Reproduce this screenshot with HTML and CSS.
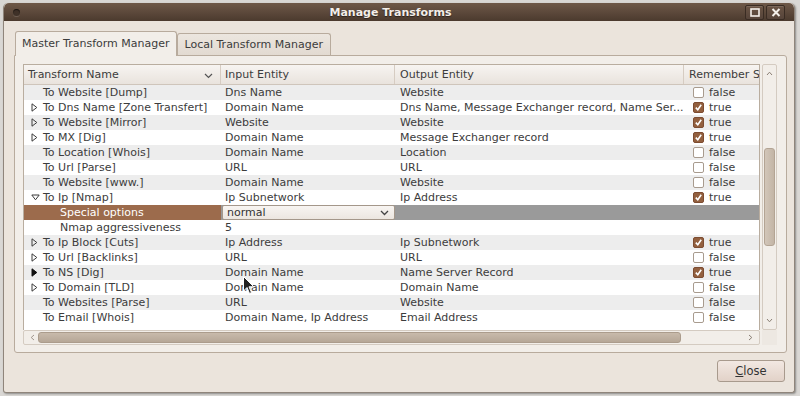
FILE: index.html
```html
<!DOCTYPE html>
<html lang="en">
<head>
  <meta charset="UTF-8">
  <meta name="viewport" content="width=device-width, initial-scale=1.0">
  <title>Manage Transforms</title>
  <link rel="stylesheet" href="styles.css">
</head>
<body>

  <div class="window">
    <div class="titlebar">
      <span class="menu-btn"></span>
      <span class="title">Manage Transforms</span>
      <div class="wm-buttons">
        <span class="wm-btn">
          <svg width="10" height="9" viewBox="0 0 10 9"><rect x="1" y="1" width="8" height="7" fill="none" stroke="#f4efea" stroke-width="1.6"/></svg>
        </span>
        <span class="wm-btn">
          <svg width="10" height="9" viewBox="0 0 10 9"><path d="M1.5 1 L8.5 8 M8.5 1 L1.5 8" stroke="#f4efea" stroke-width="2"/></svg>
        </span>
      </div>
    </div>

    <div class="content">
      <div class="tabs">
        <div class="tab active">Master Transform Manager</div>
        <div class="tab">Local Transform Manager</div>
      </div>

      <div class="panel">
        <div class="tree">
          <div class="tree-head">
            <div class="th">Transform Name
              <svg class="sort" width="9" height="6" viewBox="0 0 9 6"><path d="M1 1 L4.5 4.5 L8 1" fill="none" stroke="#555" stroke-width="1.2"/></svg>
            </div>
            <div class="th">Input Entity</div>
            <div class="th">Output Entity</div>
            <div class="th">Remember S</div>
          </div>

          <div class="tree-body">
            <div class="row alt">
              <div class="td name"><span class="exp"></span>To Website [Dump]</div>
              <div class="td">Dns Name</div>
              <div class="td out">Website</div>
              <div class="td rem"><span class="check"></span>false</div>
            </div>
            <div class="row">
              <div class="td name"><span class="exp"><svg width="7" height="9" viewBox="0 0 7 9"><path d="M1 0.8 L5.8 4.5 L1 8.2 Z" fill="none" stroke="#3c3c3c"/></svg></span>To Dns Name [Zone Transfert]</div>
              <div class="td">Domain Name</div>
              <div class="td out">Dns Name, Message Exchanger record, Name Ser...</div>
              <div class="td rem"><span class="check on"></span>true</div>
            </div>
            <div class="row alt">
              <div class="td name"><span class="exp"><svg width="7" height="9" viewBox="0 0 7 9"><path d="M1 0.8 L5.8 4.5 L1 8.2 Z" fill="none" stroke="#3c3c3c"/></svg></span>To Website [Mirror]</div>
              <div class="td">Website</div>
              <div class="td out">Website</div>
              <div class="td rem"><span class="check on"></span>true</div>
            </div>
            <div class="row">
              <div class="td name"><span class="exp"><svg width="7" height="9" viewBox="0 0 7 9"><path d="M1 0.8 L5.8 4.5 L1 8.2 Z" fill="none" stroke="#3c3c3c"/></svg></span>To MX [Dig]</div>
              <div class="td">Domain Name</div>
              <div class="td out">Message Exchanger record</div>
              <div class="td rem"><span class="check on"></span>true</div>
            </div>
            <div class="row alt">
              <div class="td name"><span class="exp"></span>To Location [Whois]</div>
              <div class="td">Domain Name</div>
              <div class="td out">Location</div>
              <div class="td rem"><span class="check"></span>false</div>
            </div>
            <div class="row">
              <div class="td name"><span class="exp"></span>To Url [Parse]</div>
              <div class="td">URL</div>
              <div class="td out">URL</div>
              <div class="td rem"><span class="check"></span>false</div>
            </div>
            <div class="row alt">
              <div class="td name"><span class="exp"></span>To Website [www.]</div>
              <div class="td">Domain Name</div>
              <div class="td out">Website</div>
              <div class="td rem"><span class="check"></span>false</div>
            </div>
            <div class="row">
              <div class="td name"><span class="exp"><svg width="9" height="7" viewBox="0 0 9 7"><path d="M0.8 1 L8.2 1 L4.5 5.8 Z" fill="none" stroke="#3c3c3c"/></svg></span>To Ip [Nmap]</div>
              <div class="td">Ip Subnetwork</div>
              <div class="td out">Ip Address</div>
              <div class="td rem"><span class="check on"></span>true</div>
            </div>
            <div class="row selected">
              <div class="td name child">Special options</div>
              <div class="td combo-cell">
                <div class="combo">normal
                  <svg width="9" height="6" viewBox="0 0 9 6"><path d="M1 1 L4.5 4.5 L8 1" fill="none" stroke="#444" stroke-width="1.3"/></svg>
                </div>
              </div>
              <div class="td out"></div>
              <div class="td rem"></div>
            </div>
            <div class="row">
              <div class="td name child">Nmap aggressiveness</div>
              <div class="td">5</div>
              <div class="td out"></div>
              <div class="td rem"></div>
            </div>
            <div class="row alt">
              <div class="td name"><span class="exp"><svg width="7" height="9" viewBox="0 0 7 9"><path d="M1 0.8 L5.8 4.5 L1 8.2 Z" fill="none" stroke="#3c3c3c"/></svg></span>To Ip Block [Cuts]</div>
              <div class="td">Ip Address</div>
              <div class="td out">Ip Subnetwork</div>
              <div class="td rem"><span class="check on"></span>true</div>
            </div>
            <div class="row">
              <div class="td name"><span class="exp"><svg width="7" height="9" viewBox="0 0 7 9"><path d="M1 0.8 L5.8 4.5 L1 8.2 Z" fill="none" stroke="#3c3c3c"/></svg></span>To Url [Backlinks]</div>
              <div class="td">URL</div>
              <div class="td out">URL</div>
              <div class="td rem"><span class="check"></span>false</div>
            </div>
            <div class="row alt">
              <div class="td name"><span class="exp"><svg width="7" height="9" viewBox="0 0 7 9"><path d="M1 0.8 L5.8 4.5 L1 8.2 Z" fill="#111" stroke="#111"/></svg></span>To NS [Dig]</div>
              <div class="td">Domain Name</div>
              <div class="td out">Name Server Record</div>
              <div class="td rem"><span class="check on"></span>true</div>
            </div>
            <div class="row">
              <div class="td name"><span class="exp"><svg width="7" height="9" viewBox="0 0 7 9"><path d="M1 0.8 L5.8 4.5 L1 8.2 Z" fill="none" stroke="#3c3c3c"/></svg></span>To Domain [TLD]</div>
              <div class="td">Domain Name</div>
              <div class="td out">Domain Name</div>
              <div class="td rem"><span class="check"></span>false</div>
            </div>
            <div class="row alt">
              <div class="td name"><span class="exp"></span>To Websites [Parse]</div>
              <div class="td">URL</div>
              <div class="td out">Website</div>
              <div class="td rem"><span class="check"></span>false</div>
            </div>
            <div class="row">
              <div class="td name"><span class="exp"></span>To Email [Whois]</div>
              <div class="td">Domain Name, Ip Address</div>
              <div class="td out">Email Address</div>
              <div class="td rem"><span class="check"></span>false</div>
            </div>
          </div>

          <svg class="cursor" width="12" height="19" viewBox="0 0 12 19">
            <path d="M0.5 0.5 L0.5 15 L4 11.5 L6.5 17.5 L8.5 16.5 L6 10.8 L10.8 10.8 Z" fill="#222" stroke="#fff" stroke-width="1"/>
          </svg>
        </div>

        <div class="vscroll">
          <svg class="arrow" width="7" height="5" viewBox="0 0 7 5"><path d="M1 4 L3.5 1.2 L6 4" fill="none" stroke="#8a7f75"/></svg>
          <div class="vtrack"><div class="vthumb"></div></div>
          <svg class="arrow" width="7" height="5" viewBox="0 0 7 5"><path d="M1 1 L3.5 3.8 L6 1" fill="none" stroke="#8a7f75"/></svg>
        </div>

        <div class="hscroll">
          <svg class="arrow" width="5" height="7" viewBox="0 0 5 7"><path d="M4 1 L1.2 3.5 L4 6" fill="none" stroke="#a0968c"/></svg>
          <div class="htrack"><div class="hthumb"></div></div>
          <svg class="arrow" width="5" height="7" viewBox="0 0 5 7"><path d="M1 1 L3.8 3.5 L1 6" fill="none" stroke="#8a7f75"/></svg>
        </div>
        <div class="corner"></div>
      </div>

      <div class="actions">
        <button type="button" class="close-btn"><u>C</u>lose</button>
      </div>
    </div>
  </div>

</body>
</html>
```

FILE: styles.css
```css
body {
  margin: 0;
  width: 800px;
  height: 396px;
  overflow: hidden;
  background-color: #d9d7d4;
  font-family: 'DejaVu Sans', Verdana, sans-serif;
  font-size: 11px;
  color: #3c3c3c;
}
.window {
  margin: 3px 0 0 3px;
  width: 790px;
  height: 389px;
  background-color: #ebe4dc;
  border: 1px solid #8f857b;
  border-top: none;
  border-radius: 5px 5px 3px 3px;
  box-shadow: 1px 1px 2px rgba(0, 0, 0, 0.35);
  overflow: hidden;
}
.titlebar {
  height: 18px;
  display: flex;
  align-items: center;
  background: linear-gradient(#6e5848, #4b3a2e);
  border-radius: 5px 5px 0 0;
}
.menu-btn {
  width: 7px;
  height: 7px;
  margin-left: 9px;
  border-radius: 50%;
  background: #3f3128;
  box-shadow: inset 0 1px 1px rgba(0, 0, 0, 0.6), 0 1px 0 rgba(255, 255, 255, 0.15);
}
.title {
  flex: 1;
  text-align: center;
  font-weight: bold;
  color: #f3eee9;
  padding-left: 16px;
  text-shadow: 0 1px 1px rgba(0, 0, 0, 0.5);
}
.wm-buttons {
  display: flex;
  gap: 2px;
  margin-right: 9px;
}
.wm-btn {
  width: 17px;
  height: 13px;
  display: flex;
  align-items: center;
  justify-content: center;
  border: 1px solid #3a2c23;
  border-radius: 2px;
  background: linear-gradient(#6a5444, #56443a);
  box-shadow: inset 0 1px 0 rgba(255, 255, 255, 0.12);
}
.content {
  padding: 10px 7px 0 10px;
}
.tabs {
  display: flex;
  align-items: flex-end;
  height: 24px;
  margin-left: 1px;
}
.tab {
  height: 21px;
  line-height: 21px;
  padding: 0 7px;
  background: linear-gradient(#ece6df, #e2dad1);
  border: 1px solid #b8ab9d;
  border-bottom: none;
  border-radius: 3px 3px 0 0;
}
.tab.active {
  height: 24px;
  line-height: 24px;
  padding: 0 6px;
  margin-bottom: -1px;
  background: #f2eee9;
  position: relative;
  z-index: 1;
}
.panel {
  box-sizing: border-box;
  height: 298px;
  background: #f2eee9;
  border: 1px solid #b8ab9d;
  border-radius: 0 3px 3px 3px;
  padding: 8px 8px 0 8px;
  display: grid;
  grid-template-columns: 737px 15px;
  grid-template-rows: 266px 15px;
  column-gap: 2px;
}
.tree {
  position: relative;
  background: #fff;
  border: 1px solid #b9ad9f;
  border-bottom: none;
  overflow: hidden;
}
.tree-head {
  display: grid;
  grid-template-columns: 197px 174px 289px 80px;
  height: 20px;
  background: linear-gradient(#f7f4f1, #e9e3dd);
  border-bottom: 1px solid #cfc5bb;
  box-sizing: border-box;
}
.th {
  position: relative;
  line-height: 20px;
  padding-left: 4px;
  white-space: nowrap;
  overflow: hidden;
  border-right: 1px solid #d6ccc2;
  box-sizing: border-box;
}
.th:nth-child(3) {
  padding-left: 5px;
}
.th:last-child {
  border-right: none;
  padding-left: 5px;
}
.th .sort {
  position: absolute;
  right: 7px;
  top: 8px;
}
.row {
  display: grid;
  grid-template-columns: 197px 174px 289px 80px;
  height: 15px;
  line-height: 15px;
}
.row.alt {
  background: #ededed;
}
.td {
  white-space: nowrap;
  overflow: hidden;
  padding-left: 4px;
  display: flex;
  align-items: center;
}
.td.out {
  padding-left: 5px;
}
.td.rem {
  padding-left: 9px;
}
.td.child {
  padding-left: 36px;
}
.exp {
  width: 15px;
  height: 15px;
  display: flex;
  align-items: center;
  padding-left: 3px;
  box-sizing: border-box;
}
.check {
  width: 9px;
  height: 9px;
  margin-right: 5px;
  border: 1px solid #a89b8e;
  border-radius: 2px;
  background: #fff;
}
.check.on {
  border-color: #7d4c31;
  background: #93603f url("data:image/svg+xml,%3Csvg xmlns='http://www.w3.org/2000/svg' width='9' height='9'%3E%3Cpath d='M1.8 4.6 L3.8 6.8 L7.2 1.8' fill='none' stroke='%23fff' stroke-width='1.6'/%3E%3C/svg%3E") no-repeat center;
}
.row.selected {
  background: #9a9a9a;
}
.row.selected .name {
  background: #9c6b4c;
  color: #fff;
}
.combo-cell {
  padding: 0 0 0 1px;
}
.combo {
  flex: 1;
  height: 13px;
  line-height: 13px;
  padding: 0 5px 0 4px;
  display: flex;
  align-items: center;
  justify-content: space-between;
  background: linear-gradient(#f8f5f2, #ece6e0);
  border: 1px solid #a4978a;
  border-radius: 2px;
  color: #333;
}
.cursor {
  position: absolute;
  left: 219px;
  top: 211px;
}
.vscroll {
  display: flex;
  flex-direction: column;
  align-items: center;
  background: #f2eee9;
  border: 1px solid #d4cbc1;
  border-radius: 2px;
  box-sizing: border-box;
}
.vscroll .arrow {
  margin: 6px 0;
}
.vtrack {
  flex: 1;
  width: 100%;
  padding-top: 66px;
  box-sizing: border-box;
  display: flex;
  justify-content: center;
}
.vthumb {
  width: 11px;
  height: 98px;
  border-radius: 3px;
  background: linear-gradient(90deg, #d2c6b9, #c3b5a6);
  border: 1px solid #b3a494;
  box-sizing: border-box;
}
.hscroll {
  display: flex;
  align-items: center;
  background: #f2eee9;
  border: 1px solid #d4cbc1;
  border-radius: 2px;
  padding: 0 6px;
  box-sizing: border-box;
}
.htrack {
  flex: 1;
  height: 11px;
  margin: 0 8px 0 3px;
}
.hthumb {
  width: 643px;
  height: 11px;
  border-radius: 3px;
  background: linear-gradient(#c8baab, #b6a797);
  border: 1px solid #ab9c8c;
  box-sizing: border-box;
}
.corner {
  background: #ede8e2;
}
.actions {
  display: flex;
  justify-content: flex-end;
  padding: 7px 2px 0 0;
}
.close-btn {
  width: 68px;
  height: 22px;
  font-family: 'DejaVu Sans', Verdana, sans-serif;
  font-size: 11.5px;
  color: #333;
  background: linear-gradient(#f2e8e2, #e2d2c8);
  border: 1px solid #a89a8d;
  border-radius: 3px;
  padding: 0;
  cursor: pointer;
}
```
